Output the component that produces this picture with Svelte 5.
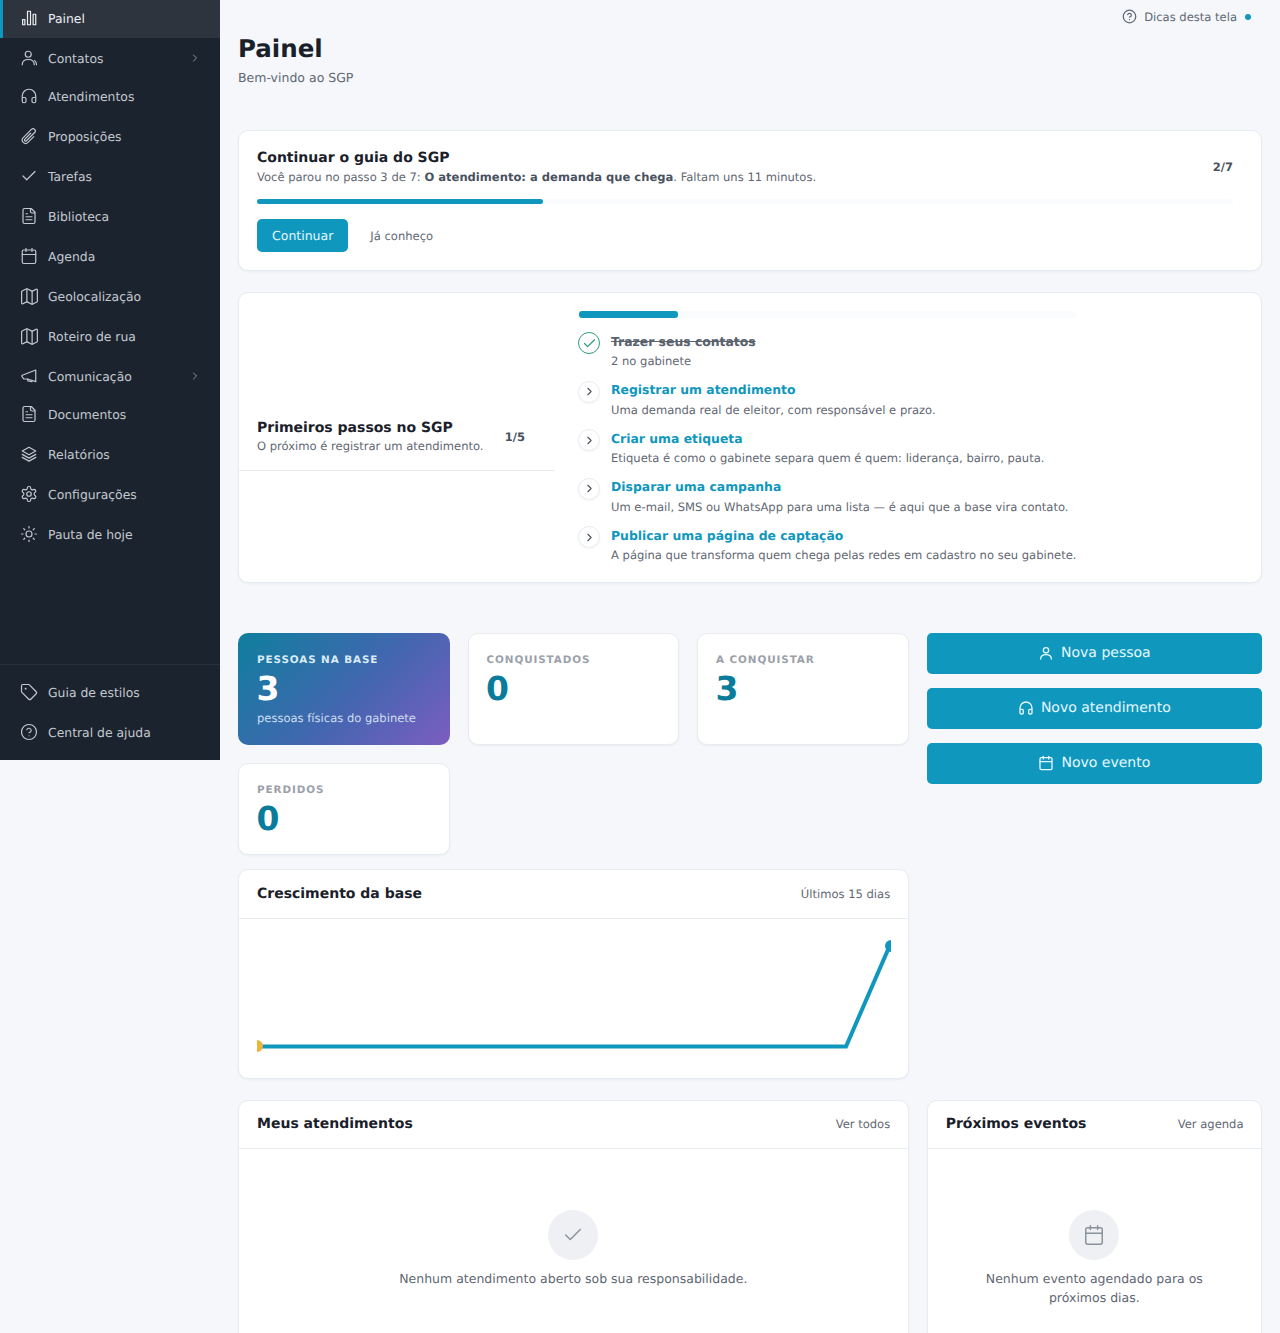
<script>
  const circle = (cx, cy, r) => `M${cx - r} ${cy}a${r} ${r} 0 1 0 ${2 * r} 0a${r} ${r} 0 1 0 ${-2 * r} 0`;
  const I = {
    bars: ['M3.5 14h3v7h-3zM10 3h4v18h-4zM17.5 7h3.5v14h-3.5z'],
    users: [circle(11, 7, 4), 'M3 21c0-4.5 3.5-7 8-7s8 2.5 8 7', 'M19.5 15.5c1.5 1 2.5 3 2.5 5.5'],
    user: [circle(12, 8, 4), 'M4 21c0-4 3.5-6.5 8-6.5s8 2.500 8 6.500'],
    head: ['M3 14h3a2 2 0 0 1 2 2v3a2 2 0 0 1-2 2H5a2 2 0 0 1-2-2v-7a9 9 0 0 1 18 0v7a2 2 0 0 1-2 2h-1a2 2 0 0 1-2-2v-3a2 2 0 0 1 2-2h3'],
    clip: ['M18.375 12.739l-7.693 7.693a4.5 4.5 0 01-6.364-6.364l10.94-10.94A3 3 0 1119.5 7.372L8.552 18.32m.009-.01l-.01.01m5.699-9.941l-7.81 7.81a1.5 1.5 0 002.112 2.13'],
    check: ['M20 6 9 17l-5-5'],
    file: ['M15 2H6a2 2 0 0 0-2 2v16a2 2 0 0 0 2 2h12a2 2 0 0 0 2-2V7Z', 'M14 2v4a2 2 0 0 0 2 2h4', 'M10 9H8', 'M16 13H8', 'M16 17H8'],
    cal: ['M8 2v4', 'M16 2v4', 'M5 4h14a2 2 0 0 1 2 2v14a2 2 0 0 1-2 2H5a2 2 0 0 1-2-2V6a2 2 0 0 1 2-2z', 'M3 10h18'],
    map: ['M14.106 5.553a2 2 0 0 0 1.788 0l3.659-1.83A1 1 0 0 1 21 4.619v12.764a1 1 0 0 1-.553.894l-4.553 2.277a2 2 0 0 1-1.788 0l-4.212-2.106a2 2 0 0 0-1.788 0l-3.659 1.83A1 1 0 0 1 3 19.381V6.618a1 1 0 0 1 .553-.894l4.553-2.277a2 2 0 0 1 1.788 0z', 'M15 5.764v15', 'M9 3.236v15'],
    mega: ['M21 4v15.500L10 16H5L2.500 12.500a1 1 0 0 1 .5-1.500z', 'M10 16l.5 2.500 5.500 1'],
    layers: ['M12 3 3 8l9 5 9-5z', 'M3 12.500l9 5 9-5', 'M3 16.500l9 5 9-5'],
    gear: ['M12.220 2h-.44a2 2 0 0 0-2 2v.18a2 2 0 0 1-1 1.730l-.43.25a2 2 0 0 1-2 0l-.15-.08a2 2 0 0 0-2.730.73l-.22.38a2 2 0 0 0 .73 2.730l.15.1a2 2 0 0 1 1 1.720v.51a2 2 0 0 1-1 1.740l-.15.09a2 2 0 0 0-.73 2.730l.22.38a2 2 0 0 0 2.730.73l.15-.08a2 2 0 0 1 2 0l.43.25a2 2 0 0 1 1 1.730V20a2 2 0 0 0 2 2h.44a2 2 0 0 0 2-2v-.18a2 2 0 0 1 1-1.730l.43-.25a2 2 0 0 1 2 0l.15.08a2 2 0 0 0 2.730-.73l.22-.39a2 2 0 0 0-.73-2.730l-.15-.08a2 2 0 0 1-1-1.740v-.5a2 2 0 0 1 1-1.740l.15-.09a2 2 0 0 0 .73-2.730l-.22-.38a2 2 0 0 0-2.730-.73l-.15.08a2 2 0 0 1-2 0l-.43-.25a2 2 0 0 1-1-1.730V4a2 2 0 0 0-2-2z', circle(12, 12, 3)],
    sun: [circle(12, 12, 4), 'M12 2v2', 'M12 20v2', 'M4.930 4.930l1.410 1.410', 'M17.660 17.660l1.410 1.410', 'M2 12h2', 'M20 12h2', 'M6.340 17.660l-1.410 1.410', 'M19.070 4.930l-1.410 1.410'],
    tag: ['M12.586 2.586A2 2 0 0 0 11.172 2H4a2 2 0 0 0-2 2v7.172a2 2 0 0 0 .586 1.414l8.704 8.704a2.426 2.426 0 0 0 3.420 0l6.580-6.580a2.426 2.426 0 0 0 0-3.420z', circle(7.5, 7.5, 0.5)],
    help: [circle(12, 12, 10), 'M9.090 9a3 3 0 0 1 5.830 1c0 2-3 3-3 3', 'M12 17h.01'],
    chev: ['m9 18 6-6-6-6']
  };
  const nav = [
    { i: 'bars', t: 'Painel', active: true, short: true },
    { i: 'users', t: 'Contatos', more: true },
    { i: 'head', t: 'Atendimentos', short: true },
    { i: 'clip', t: 'Proposições' },
    { i: 'check', t: 'Tarefas' },
    { i: 'file', t: 'Biblioteca' },
    { i: 'cal', t: 'Agenda' },
    { i: 'map', t: 'Geolocalização', wide: true },
    { i: 'map', t: 'Roteiro de rua', wide: true },
    { i: 'mega', t: 'Comunicação', more: true },
    { i: 'file', t: 'Documentos', short: true },
    { i: 'layers', t: 'Relatórios' },
    { i: 'gear', t: 'Configurações' },
    { i: 'sun', t: 'Pauta de hoje' }
  ];
  const foot = [{ i: 'tag', t: 'Guia de estilos' }, { i: 'help', t: 'Central de ajuda' }];
  const steps = [
    { t: 'Registrar um atendimento', d: 'Uma demanda real de eleitor, com responsável e prazo.' },
    { t: 'Criar uma etiqueta', d: 'Etiqueta é como o gabinete separa quem é quem: liderança, bairro, pauta.' },
    { t: 'Disparar uma campanha', d: 'Um e-mail, SMS ou WhatsApp para uma lista — é aqui que a base vira contato.' },
    { t: 'Publicar uma página de captação', d: 'A página que transforma quem chega pelas redes em cadastro no seu gabinete.' }
  ];
  const actions = [{ i: 'user', t: 'Nova pessoa' }, { i: 'head', t: 'Novo atendimento' }, { i: 'cal', t: 'Novo evento' }];
</script>

{#snippet icon(name, size, cls = '', sw = 1.6)}
  <svg class={cls} width={size} height={size} viewBox="0 0 24 24" fill="none" stroke="currentColor" stroke-width={sw} stroke-linecap="round" stroke-linejoin="round" aria-hidden="true">
    {#each I[name] as d}<path {d} />{/each}
  </svg>
{/snippet}

{#snippet navrow(n)}
  <a class="row" class:active={n.active} class:short={n.short} href="#top">
    {#if n.wide}{@render icon(n.i, 21, 'wide', 1.4)}{:else}{@render icon(n.i, 18)}{/if}
    <span class="label">{n.t}</span>
    {#if n.more}{@render icon('chev', 12, 'more', 1.8)}{/if}
  </a>
{/snippet}

<div class="page">
  <aside class="side">
    <nav class="nav">
      {#each nav as n}{@render navrow(n)}{/each}
    </nav>
    <div class="foot">
      {#each foot as n}{@render navrow(n)}{/each}
    </div>
  </aside>

  <main class="main">
    <div class="tips">
      {@render icon('help', 15, '', 2)}
      <span>Dicas desta tela</span>
      <i class="dot"></i>
    </div>
    <h1>Painel</h1>
    <p class="sub">Bem-vindo ao SGP</p>

    <section class="card guide">
      <div class="guide-top">
        <div>
          <h2>Continuar o guia do SGP</h2>
          <p class="small">Você parou no passo 3 de 7: <b>O atendimento: a demanda que chega</b>. Faltam uns 11 minutos.</p>
        </div>
        <span class="count">2/7</span>
      </div>
      <div class="track guide-track"><div class="fill" style="width: 29.300%"></div></div>
      <div class="guide-actions">
        <button class="btn">Continuar</button>
        <button class="ghost">Já conheço</button>
      </div>
    </section>

    <section class="card first">
      <div class="first-left">
        <div>
          <h2>Primeiros passos no SGP</h2>
          <p class="small">O próximo é registrar um atendimento.</p>
        </div>
        <span class="count">1/5</span>
      </div>
      <div class="first-right">
        <div class="track steps-track"><div class="fill" style="width: 20%"></div></div>
        <div class="step">
          <span class="mark done">{@render icon('check', 15, '', 2)}</span>
          <div>
            <div class="step-title struck">Trazer seus contatos</div>
            <div class="step-desc">2 no gabinete</div>
          </div>
        </div>
        {#each steps as s}
          <div class="step">
            <span class="mark">{@render icon('chev', 13, '', 2)}</span>
            <div>
              <div class="step-title">{s.t}</div>
              <div class="step-desc">{s.d}</div>
            </div>
          </div>
        {/each}
      </div>
    </section>

    <div class="grid">
      <div class="left">
        <div class="kpis">
          <div class="kpi hero">
            <div class="kpi-label">PESSOAS NA BASE</div>
            <div class="kpi-value">3</div>
            <div class="kpi-note">pessoas físicas do gabinete</div>
          </div>
          <div class="kpi card tall">
            <div class="kpi-label">CONQUISTADOS</div>
            <div class="kpi-value">0</div>
          </div>
          <div class="kpi card tall">
            <div class="kpi-label">A CONQUISTAR</div>
            <div class="kpi-value">3</div>
          </div>
          <div class="kpi card">
            <div class="kpi-label">PERDIDOS</div>
            <div class="kpi-value">0</div>
          </div>
        </div>
        <section class="card chart">
          <header class="head"><h3>Crescimento da base</h3><span>Últimos 15 dias</span></header>
          <div class="chart-body">
            <svg width="634" height="124" viewBox="0 0 634 124" aria-hidden="true">
              <polyline points="0,109.500 589,109.500 633,8" fill="none" stroke="#0f97bd" stroke-width="4" />
              <circle cx="0" cy="109" r="6" fill="#eab63a" />
              <circle cx="634" cy="9" r="6" fill="#0f97bd" />
            </svg>
          </div>
        </section>
      </div>
      <div class="actions">
        {#each actions as a}
          <button class="btn big">{@render icon(a.i, 16, '', 2)}{a.t}</button>
        {/each}
      </div>
    </div>

    <div class="lists">
      <section class="card list">
        <header class="head"><h3>Meus atendimentos</h3><span>Ver todos</span></header>
        <div class="empty">
          <span class="bubble">{@render icon('check', 22)}</span>
          <p>Nenhum atendimento aberto sob sua responsabilidade.</p>
        </div>
      </section>
      <section class="card list">
        <header class="head"><h3>Próximos eventos</h3><span>Ver agenda</span></header>
        <div class="empty">
          <span class="bubble">{@render icon('cal', 22)}</span>
          <p>Nenhum evento agendado para os próximos dias.</p>
        </div>
      </section>
    </div>
  </main>
</div>

<style>
  :global(body) { margin: 0; background: #f5f7fa; font-family: "DejaVu Sans", sans-serif; color: #1a202a; text-rendering: geometricPrecision; }
  * { box-sizing: border-box; }
  h1, h2, h3, p { margin: 0; }
  button { font-family: inherit; border: 0; cursor: pointer; text-rendering: geometricPrecision; }

  .page { display: flex; align-items: flex-start; height: 1333px; overflow: hidden; }
  .side { width: 220px; height: 760px; flex: none; background: #1b232e; display: flex; flex-direction: column; }
  .nav { flex: 1; }
  .foot { border-top: 1px solid #272f3a; padding: 7px 0 8px; }
  .row { display: flex; align-items: center; height: 40px; padding-left: 20px; gap: 10px; color: #c3c8cf; font-size: 12.400px; text-decoration: none; position: relative; }
  .row.short { height: 38px; padding-bottom: 2px; }
  .row.active { background: #2d343e; color: #eef0f3; }
  .row.active::before { content: ""; position: absolute; left: 0; top: 0; bottom: 0; width: 3px; background: #0f97bd; }
  .label { flex: 1; }
  .row :global(.more) { margin-right: 19px; color: #9aa1ab; }
  .row :global(.wide) { margin: 0 -1.500px; }

  .main { flex: 1; min-width: 0; padding: 0 18px; position: relative; }
  .tips { position: absolute; top: 9px; right: 29px; display: flex; align-items: center; gap: 7px; font-size: 11.550px; color: #5f6772; }
  .dot { width: 6px; height: 6px; border-radius: 50%; background: #0f97bd; margin-left: 1px; }
  h1 { font-size: 24.500px; font-weight: 700; line-height: 32px; padding-top: 33px; box-sizing: content-box; }
  .sub { font-size: 12.500px; color: #5f6772; margin-top: 5px; line-height: 16px; }

  .card { background: #fff; border: 1px solid #e8ebef; border-radius: 10px; box-shadow: 0 1px 2px rgba(20, 30, 50, .05); }
  h2 { font-size: 14px; font-weight: 700; line-height: 18px; }
  .small { font-size: 11.550px; color: #5f6772; line-height: 16px; margin-top: 2px; }
  .small b { color: #4a5260; }
  .count { font-size: 11.550px; font-weight: 700; color: #4a5260; }

  .guide { margin-top: 44px; height: 141px; padding: 17px 18px; }
  .guide-top { display: flex; justify-content: space-between; align-items: center; padding: 1px 10px 0 0; }
  .track { height: 5px; border-radius: 3px; background: #fafbfc; }
  .fill { height: 100%; border-radius: 3px; background: #0f97bd; }
  .guide-track { margin-top: 14px; margin-right: 10px; }
  .guide-actions { display: flex; align-items: center; gap: 22px; margin-top: 15px; }
  .btn { background: #0f97bd; color: #e6f8fd; border-radius: 5px; font-size: 12.500px; height: 33px; padding: 0 15px; }
  .ghost { background: none; padding: 0; font-size: 11.550px; color: #5f6772; margin-top: 1px; }

  .first { margin-top: 21px; height: 291px; display: flex; align-items: center; }
  .first-left { width: 316px; flex: none; height: 67px; padding: 0 30px 0 18px; border-bottom: 1px solid #e8ebef; display: flex; align-items: center; justify-content: space-between; }
  .first-left > div { padding-bottom: 1px; }
  .first-left .small { margin-top: 1px; }
  .first-right { padding: 18px 0 0 24px; align-self: flex-start; }
  .steps-track { height: 7px; border-radius: 4px; margin-bottom: 14.500px; width: 497px; }
  .step { display: flex; gap: 11px; height: 48.500px; margin-left: -1px; }
  .mark { width: 22px; height: 22px; border-radius: 50%; flex: none; border: 1px solid #e8ebef; display: flex; align-items: center; justify-content: center; margin-top: -.5px; color: #4a5260; box-shadow: 0 1px 2px rgba(20, 30, 50, .05); }
  .mark.done { border-color: #2e9e7c; color: #2e9e7c; box-shadow: none; }
  .step-title { font-size: 12.400px; font-weight: 700; color: #0f97bd; line-height: 18px; }
  .step-title.struck { color: #5a626e; text-decoration: line-through; }
  .step-desc { font-size: 11.550px; color: #5f6772; line-height: 16px; margin-top: 2.500px; white-space: nowrap; }

  .grid { display: grid; grid-template-columns: 2fr 1fr; gap: 18px; margin-top: 50px; }
  .left { min-width: 0; }
  .kpis { display: grid; grid-template-columns: repeat(3, 1fr); gap: 18px; }
  .kpi { padding: 19px 18px 0; height: 92px; border-radius: 10px; }
  .kpi.tall, .kpi.hero { height: 112px; }
  .hero { background: linear-gradient(135deg, #0f7f9e 0%, #4366b0 55%, #7c5dc0 100%); color: #fff; padding: 20px 19px 0; }
  .kpi-label { font-size: 10.400px; font-weight: 700; letter-spacing: .9px; color: #9ba1aa; line-height: 14px; }
  .hero .kpi-label { color: #d9ecf4; }
  .kpi-value { font-size: 33px; font-weight: 700; line-height: 38px; color: #0a7c9b; margin-top: 3px; margin-left: -.5px; }
  .hero .kpi-value { color: #fff; }
  .kpi-note { font-size: 11.550px; color: #cfdff0; line-height: 16px; margin-top: 2px; }

  .chart { margin-top: 14px; height: 209.500px; }
  .head { height: 49px; border-bottom: 1px solid #e8ebef; padding: 0 17.500px 0 18px; display: flex; align-items: center; justify-content: space-between; }
  .head h3 { font-size: 14px; font-weight: 700; }
  .head span { font-size: 11.550px; color: #5f6772; }
  .chart-body { padding: 18px 18px 0; }
  .chart-body svg { display: block; }

  .actions { display: flex; flex-direction: column; gap: 14px; }
  .btn.big { height: 41px; font-size: 14px; display: flex; align-items: center; justify-content: center; gap: 7px; width: 100%; padding-bottom: 2px; }

  .lists { display: grid; grid-template-columns: 2fr 1fr; gap: 18px; margin-top: 21.500px; }
  .list { height: 300px; border-bottom-left-radius: 0; border-bottom-right-radius: 0; }
  .list .head { height: 48px; padding-bottom: 2px; }
  .empty { display: flex; flex-direction: column; align-items: center; padding: 61px 50px 0; text-align: center; }
  .bubble { width: 50px; height: 50px; border-radius: 50%; background: #eef0f3; display: flex; align-items: center; justify-content: center; color: #8b929c; }
  .empty p { font-size: 12.500px; color: #5f6772; line-height: 19px; margin-top: 9px; }
</style>
